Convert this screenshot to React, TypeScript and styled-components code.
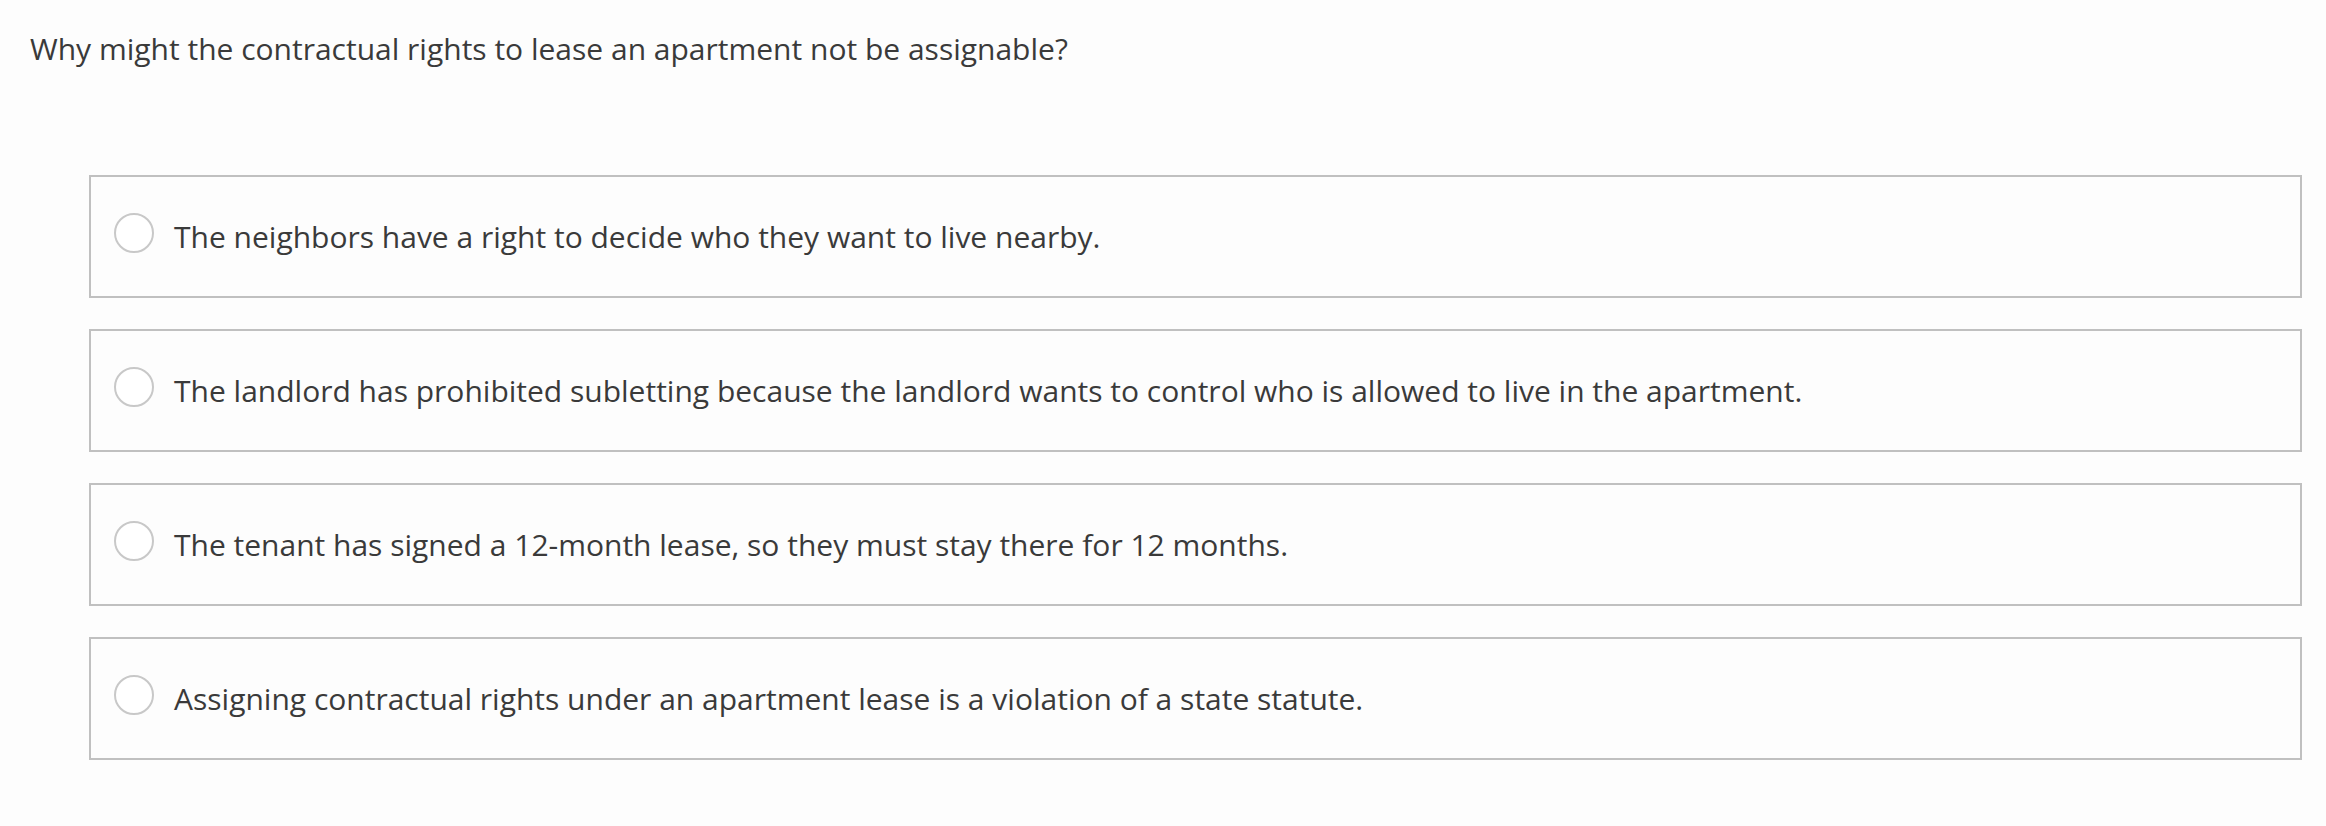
import styled, { createGlobalStyle } from 'styled-components';

const GlobalStyle = createGlobalStyle`
  html, body {
    margin: 0;
    padding: 0;
    background: #fdfdfd;
  }
  body {
    font-family: "Open Sans", "Noto Sans", sans-serif;
    color: #3a3a3a;
  }
`;

const Page = styled.div`
  padding: 28px 24px 40px 30px;
`;

const Question = styled.h2`
  margin: 0;
  font-size: 30px;
  font-weight: 400;
  line-height: 41px;
  color: #3a3a3a;
`;

const Options = styled.div`
  display: flex;
  flex-direction: column;
  gap: 31px;
  margin-top: 106px;
  margin-left: 59px;
`;

const Option = styled.label`
  display: flex;
  align-items: center;
  gap: 20px;
  box-sizing: border-box;
  height: 123px;
  padding: 0 24px 0 23px;
  border: 2px solid #c0c0c0;
  background: #fdfdfd;
  cursor: pointer;
`;

const Radio = styled.span`
  flex: none;
  box-sizing: border-box;
  width: 40px;
  height: 40px;
  margin-bottom: 8px;
  border-radius: 50%;
  border: 2px solid #c8c8c8;
  background: #fff;
`;

const OptionText = styled.span`
  font-size: 30px;
  line-height: 41px;
  color: #3a3a3a;
`;

const answers = [
  'The neighbors have a right to decide who they want to live nearby.',
  'The landlord has prohibited subletting because the landlord wants to control who is allowed to live in the apartment.',
  'The tenant has signed a 12-month lease, so they must stay there for 12 months.',
  'Assigning contractual rights under an apartment lease is a violation of a state statute.',
];

export default function App() {
  return (
    <>
      <GlobalStyle />
      <Page>
        <Question>Why might the contractual rights to lease an apartment not be assignable?</Question>
        <Options>
          {answers.map((text, i) => (
            <Option key={i}>
              <Radio />
              <OptionText>{text}</OptionText>
            </Option>
          ))}
        </Options>
      </Page>
    </>
  );
}
